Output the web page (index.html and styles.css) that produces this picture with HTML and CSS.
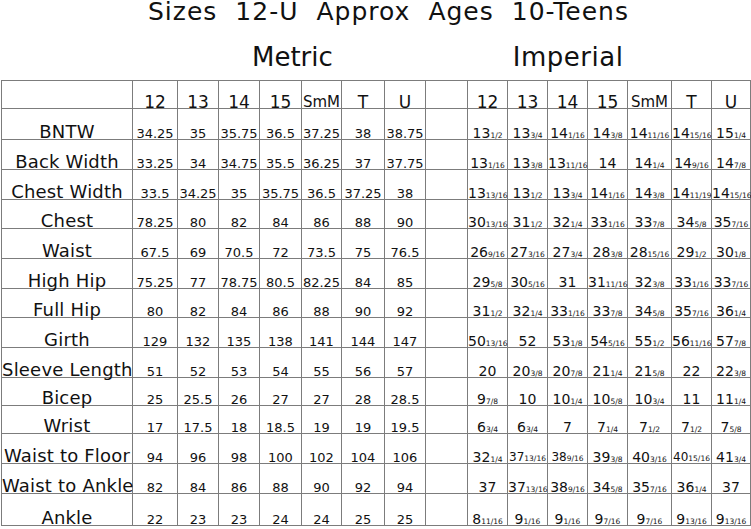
FILE: index.html
```html
<!DOCTYPE html>
<html>
<head>
<meta charset="utf-8">
<title>Sizes 12-U</title>
<link rel="stylesheet" href="styles.css">
</head>
<body>
<h1 class="title"><span>Sizes</span> <span>12-U</span> <span>Approx</span> <span>Ages</span> <span>10-Teens</span></h1>
<div class="subtitles"><span class="metric">Metric</span><span class="imperial">Imperial</span></div>
<table class="chart">
<colgroup>
<col class="w131"><col class="w45"><col class="w41"><col class="w41"><col class="w42"><col class="w40"><col class="w43"><col class="w41">
<col class="w42">
<col class="w40"><col class="w40"><col class="w40"><col class="w40"><col class="w44"><col class="w40"><col class="w39">
</colgroup>
<tr class="head">
<td></td><td>12</td><td>13</td><td>14</td><td>15</td><td class="smm">SmM</td><td>T</td><td>U</td>
<td></td>
<td>12</td><td>13</td><td>14</td><td>15</td><td class="smm">SmM</td><td>T</td><td>U</td>
</tr>
<tr class="h31">
<th>BNTW</th><td>34.25</td><td>35</td><td>35.75</td><td>36.5</td><td>37.25</td><td>38</td><td>38.75</td><td class="gap"></td>
<td class="imp">13<small>1/2</small></td><td class="imp">13<small>3/4</small></td><td class="imp">14<small>1/16</small></td><td class="imp">14<small>3/8</small></td><td class="imp">14<small>11/16</small></td><td class="imp">14<small>15/16</small></td><td class="imp">15<small>1/4</small></td>
</tr>
<tr class="h30">
<th>Back Width</th><td>33.25</td><td>34</td><td>34.75</td><td>35.5</td><td>36.25</td><td>37</td><td>37.75</td><td class="gap"></td>
<td class="imp">13<small>1/16</small></td><td class="imp">13<small>3/8</small></td><td class="imp">13<small>11/16</small></td><td class="imp">14</td><td class="imp">14<small>1/4</small></td><td class="imp">14<small>9/16</small></td><td class="imp">14<small>7/8</small></td>
</tr>
<tr class="h30">
<th>Chest Width</th><td>33.5</td><td>34.25</td><td>35</td><td>35.75</td><td>36.5</td><td>37.25</td><td>38</td><td class="gap"></td>
<td class="imp">13<small>13/16</small></td><td class="imp">13<small>1/2</small></td><td class="imp">13<small>3/4</small></td><td class="imp">14<small>1/16</small></td><td class="imp">14<small>3/8</small></td><td class="imp">14<small>11/19</small></td><td class="imp">14<small>15/16</small></td>
</tr>
<tr class="h29">
<th>Chest</th><td>78.25</td><td>80</td><td>82</td><td>84</td><td>86</td><td>88</td><td>90</td><td class="gap"></td>
<td class="imp">30<small>13/16</small></td><td class="imp">31<small>1/2</small></td><td class="imp">32<small>1/4</small></td><td class="imp">33<small>1/16</small></td><td class="imp">33<small>7/8</small></td><td class="imp">34<small>5/8</small></td><td class="imp">35<small>7/16</small></td>
</tr>
<tr class="h30">
<th>Waist</th><td>67.5</td><td>69</td><td>70.5</td><td>72</td><td>73.5</td><td>75</td><td>76.5</td><td class="gap"></td>
<td class="imp">26<small>9/16</small></td><td class="imp">27<small>3/16</small></td><td class="imp">27<small>3/4</small></td><td class="imp">28<small>3/8</small></td><td class="imp">28<small>15/16</small></td><td class="imp">29<small>1/2</small></td><td class="imp">30<small>1/8</small></td>
</tr>
<tr class="h30">
<th>High Hip</th><td>75.25</td><td>77</td><td>78.75</td><td>80.5</td><td>82.25</td><td>84</td><td>85</td><td class="gap"></td>
<td class="imp">29<small>5/8</small></td><td class="imp">30<small>5/16</small></td><td class="imp">31</td><td class="imp">31<small>11/16</small></td><td class="imp">32<small>3/8</small></td><td class="imp">33<small>1/16</small></td><td class="imp">33<small>7/16</small></td>
</tr>
<tr class="h29">
<th>Full Hip</th><td>80</td><td>82</td><td>84</td><td>86</td><td>88</td><td>90</td><td>92</td><td class="gap"></td>
<td class="imp">31<small>1/2</small></td><td class="imp">32<small>1/4</small></td><td class="imp">33<small>1/16</small></td><td class="imp">33<small>7/8</small></td><td class="imp">34<small>5/8</small></td><td class="imp">35<small>7/16</small></td><td class="imp">36<small>1/4</small></td>
</tr>
<tr class="h30">
<th>Girth</th><td>129</td><td>132</td><td>135</td><td>138</td><td>141</td><td>144</td><td>147</td><td class="gap"></td>
<td class="imp">50<small>13/16</small></td><td class="imp">52</td><td class="imp">53<small>1/8</small></td><td class="imp">54<small>5/16</small></td><td class="imp">55<small>1/2</small></td><td class="imp">56<small>11/16</small></td><td class="imp">57<small>7/8</small></td>
</tr>
<tr class="h30">
<th>Sleeve Length</th><td>51</td><td>52</td><td>53</td><td>54</td><td>55</td><td>56</td><td>57</td><td class="gap"></td>
<td class="imp">20</td><td class="imp">20<small>3/8</small></td><td class="imp">20<small>7/8</small></td><td class="imp">21<small>1/4</small></td><td class="imp">21<small>5/8</small></td><td class="imp">22</td><td class="imp">22<small>3/8</small></td>
</tr>
<tr class="h28">
<th>Bicep</th><td>25</td><td>25.5</td><td>26</td><td>27</td><td>27</td><td>28</td><td>28.5</td><td class="gap"></td>
<td class="imp">9<small>7/8</small></td><td class="imp">10</td><td class="imp">10<small>1/4</small></td><td class="imp">10<small>5/8</small></td><td class="imp">10<small>3/4</small></td><td class="imp">11</td><td class="imp">11<small>1/4</small></td>
</tr>
<tr class="h28">
<th>Wrist</th><td>17</td><td>17.5</td><td>18</td><td>18.5</td><td>19</td><td>19</td><td>19.5</td><td class="gap"></td>
<td class="imp">6<small>3/4</small></td><td class="imp">6<small>3/4</small></td><td class="imp">7</td><td class="imp">7<small>1/4</small></td><td class="imp">7<small>1/2</small></td><td class="imp">7<small>1/2</small></td><td class="imp">7<small>5/8</small></td>
</tr>
<tr class="h30">
<th>Waist to Floor</th><td>94</td><td>96</td><td>98</td><td>100</td><td>102</td><td>104</td><td>106</td><td class="gap"></td>
<td class="imp">32<small>1/4</small></td><td class="imp sm">37<small>13/16</small></td><td class="imp sm">38<small>9/16</small></td><td class="imp">39<small>3/8</small></td><td class="imp">40<small>3/16</small></td><td class="imp sm">40<small>15/16</small></td><td class="imp">41<small>3/4</small></td>
</tr>
<tr class="h30">
<th>Waist to Ankle</th><td>82</td><td>84</td><td>86</td><td>88</td><td>90</td><td>92</td><td>94</td><td class="gap"></td>
<td class="imp">37</td><td class="imp">37<small>13/16</small></td><td class="imp">38<small>9/16</small></td><td class="imp">34<small>5/8</small></td><td class="imp">35<small>7/16</small></td><td class="imp">36<small>1/4</small></td><td class="imp">37</td>
</tr>
<tr class="h32">
<th>Ankle</th><td>22</td><td>23</td><td>23</td><td>24</td><td>24</td><td>25</td><td>25</td><td class="gap"></td>
<td class="imp">8<small>11/16</small></td><td class="imp">9<small>1/16</small></td><td class="imp">9<small>1/16</small></td><td class="imp">9<small>7/16</small></td><td class="imp">9<small>7/16</small></td><td class="imp">9<small>13/16</small></td><td class="imp">9<small>13/16</small></td>
</tr>
</table>
</body>
</html>
```
FILE: styles.css
```css
html, body {
  margin: 0;
  padding: 0;
  background: #ffffff;
}
body {
  font-family: "DejaVu Sans", Verdana, sans-serif;
  color: #111111;
  width: 751px;
  height: 529px;
  overflow: hidden;
}
.title {
  display: flex;
  gap: 18px;
  margin: 0;
  padding-left: 148px;
  height: 24px;
  font-size: 25px;
  font-weight: normal;
  line-height: 24px;
  letter-spacing: 1px;
  white-space: nowrap;
}
.subtitles {
  display: flex;
  padding-top: 10px;
  height: 46px;
  font-size: 26px;
  line-height: 46px;
}
.metric {
  margin-left: 252px;
}
.imperial {
  margin-left: 180px;
  letter-spacing: 0.5px;
}
.chart {
  margin-left: 1px;
  width: 750px;
  table-layout: fixed;
  border-collapse: collapse;
}
.w131 { width: 131px; }
.w45 { width: 45px; }
.w44 { width: 44px; }
.w43 { width: 43px; }
.w42 { width: 42px; }
.w41 { width: 41px; }
.w40 { width: 40px; }
.w39 { width: 39px; }
.chart td, .chart th {
  border: 1px solid #7c7c7c;
  padding: 0;
  text-align: center;
  vertical-align: bottom;
  white-space: nowrap;
  overflow: visible;
}
.chart th {
  font-weight: normal;
  font-size: 18px;
  line-height: 15px;
  letter-spacing: 0.2px;
}
.chart td {
  font-size: 13px;
  line-height: 11px;
}
.chart td.imp {
  font-size: 14px;
  line-height: 12px;
}
.chart td.imp.sm {
  font-size: 12px;
}
.chart td.imp small {
  font-size: 7.5px;
  line-height: 0;
}
.head td {
  height: 27px;
  font-size: 17px;
  line-height: 11px;
}
.head td.smm {
  font-size: 15px;
}
.h28 th, .h28 td { height: 27px; }
.h29 th, .h29 td { height: 28px; }
.h30 th, .h30 td { height: 29px; }
.h31 th, .h31 td { height: 30px; }
.h32 th, .h32 td { height: 31px; }
```
